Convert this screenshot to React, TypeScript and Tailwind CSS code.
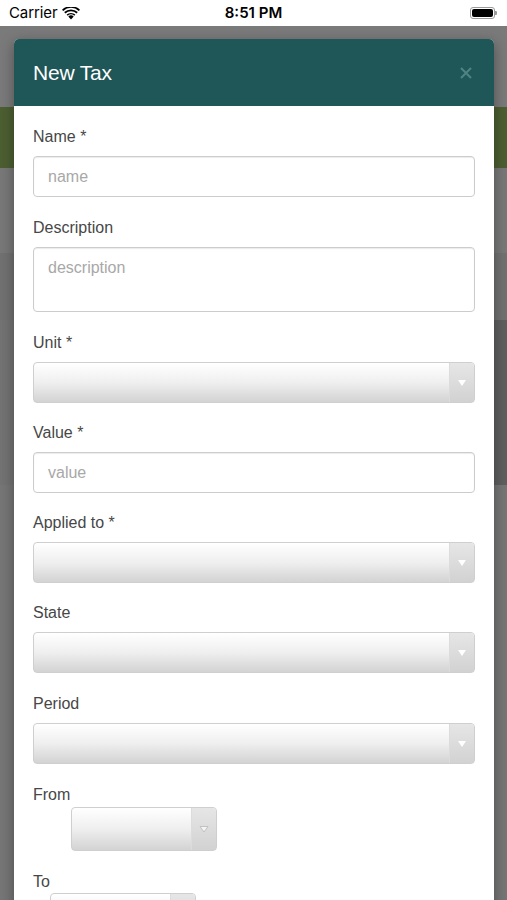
import React from "react";

function Caret({ outline = false }: { outline?: boolean }) {
  return (
    <svg width="10" height="8" viewBox="0 0 10 8">
      {outline ? (
        <path d="M1 1.5 L9 1.5 L5 7 Z" fill="#f4f4f4" stroke="#b8b8b8" strokeWidth="0.8" />
      ) : (
        <path d="M1 1 L9 1 L5 7 Z" fill="#ffffff" />
      )}
    </svg>
  );
}

function Select({ className = "", outline = false, h = "h-[41px]" }: { className?: string; outline?: boolean; h?: string }) {
  return (
    <div
      className={`${h} flex rounded-[4px] border border-[#cfcfcf] overflow-hidden bg-gradient-to-b from-[#ffffff] via-[#efefef] to-[#d3d3d3] ${className}`}
    >
      <div className="flex-1" />
      <div className="w-[25px] flex items-center justify-center bg-gradient-to-b from-[#e6e6e6] to-[#d2d2d2] border-l border-[#dcdcdc]">
        <Caret outline={outline} />
      </div>
    </div>
  );
}

function Label({ children, mb = "mb-[9px]" }: { children: React.ReactNode; mb?: string }) {
  return <div className={`text-[16px] leading-[20px] text-[#474747] ${mb}`}>{children}</div>;
}

function TextInput({ placeholder }: { placeholder: string }) {
  return (
    <div className="h-[41px] rounded-[4px] border border-[#cccccc] shadow-[inset_0_1px_1px_rgba(0,0,0,0.08)] flex items-center px-[14px] text-[16px] text-[#a8a8a8]">
      {placeholder}
    </div>
  );
}

export default function App() {
  return (
    <div className="relative w-[507px] h-[900px] overflow-hidden bg-[#767676]" style={{ fontFamily: '"Liberation Sans", Arial, sans-serif' }}>
      {/* status bar */}
      <div className="h-[26px] bg-white flex items-center px-[9px] relative" style={{ fontFamily: 'Inter, "Liberation Sans", sans-serif' }}>
        <div className="flex items-center gap-[5px]">
          <span className="text-[15px] text-black tracking-[-0.1px]">Carrier</span>
          <svg width="18" height="13" viewBox="0 0 18 13">
            <path d="M9 12.5 L6.3 9.4 A4 4 0 0 1 11.7 9.4 Z" fill="#000" />
            <path d="M4.6 7.6 A6.5 6.5 0 0 1 13.4 7.6 L12.3 8.8 A5 5 0 0 0 5.7 8.8 Z" fill="#000" />
            <path d="M2.2 5.1 A10 10 0 0 1 15.8 5.1 L14.6 6.4 A8.3 8.3 0 0 0 3.4 6.4 Z" fill="#000" />
            <path d="M0 2.7 A13.2 13.2 0 0 1 18 2.7 L16.8 3.9 A11.5 11.5 0 0 0 1.2 3.9 Z" fill="#000" />
          </svg>
        </div>
        <div className="absolute left-0 right-0 top-0 h-[26px] flex items-center justify-center text-[15px] font-semibold text-black">8:51 PM</div>
        <div className="ml-auto flex items-center mr-[1px]">
          <div className="w-[25px] h-[12px] rounded-[3px] border border-[#9a9a9a] p-[1px]">
            <div className="w-full h-full rounded-[2px] bg-black" />
          </div>
          <div className="w-[2px] h-[4px] bg-[#9a9a9a] rounded-r-[1px]" />
        </div>
      </div>

      {/* background behind overlay */}
      <div className="h-[81px] bg-[#7a7a7a]" />
      <div className="h-[61px] bg-[#4c5f31]" />
      <div className="h-[85px] bg-[#787878]" />
      <div className="h-[67px] bg-[#717171]" />
      <div className="h-[165px] flex">
        <div className="flex-1 bg-[#737373]" />
        <div className="w-[13px] bg-[#5f5f5f]" />
      </div>
      <div className="flex-1 bg-[#767676]" />

      {/* modal */}
      <div className="absolute left-[14px] top-[39px] w-[480px] h-[900px] bg-white rounded-t-[5px] shadow-[0_4px_14px_rgba(0,0,0,0.35)] overflow-hidden">
        <div className="h-[67px] bg-[#1f5657] flex items-center justify-between pl-[19px] pr-[22px]">
          <span className="text-[21px] text-white tracking-[-0.2px]">New Tax</span>
          <svg width="12" height="12" viewBox="0 0 12 12">
            <path d="M1 1 L11 11 M11 1 L1 11" stroke="#4f8384" strokeWidth="2" />
          </svg>
        </div>
        <div className="px-[19px] pt-[21px]">
          <div className="mb-[21px]">
            <Label>Name *</Label>
            <TextInput placeholder="name" />
          </div>
          <div className="mb-[21px]">
            <Label>Description</Label>
            <div className="h-[65px] rounded-[4px] border border-[#cccccc] shadow-[inset_0_1px_1px_rgba(0,0,0,0.08)] px-[14px] pt-[10px] text-[16px] leading-[20px] text-[#a8a8a8]">
              description
            </div>
          </div>
          <div className="mb-[20px]">
            <Label>Unit *</Label>
            <Select />
          </div>
          <div className="mb-[20px]">
            <Label>Value *</Label>
            <TextInput placeholder="value" />
          </div>
          <div className="mb-[20px]">
            <Label>Applied to *</Label>
            <Select />
          </div>
          <div className="mb-[21px]">
            <Label>State</Label>
            <Select />
          </div>
          <div className="mb-[21px]">
            <Label>Period</Label>
            <Select />
          </div>
          <div className="mb-[21px]">
            <Label mb="mb-[2px]">From</Label>
            <Select className="ml-[38px] w-[146px]" h="h-[44px]" outline />
          </div>
          <div>
            <Label mb="mb-[1px]">To</Label>
            <Select className="ml-[17px] w-[146px]" h="h-[44px]" outline />
          </div>
        </div>
      </div>
    </div>
  );
}
